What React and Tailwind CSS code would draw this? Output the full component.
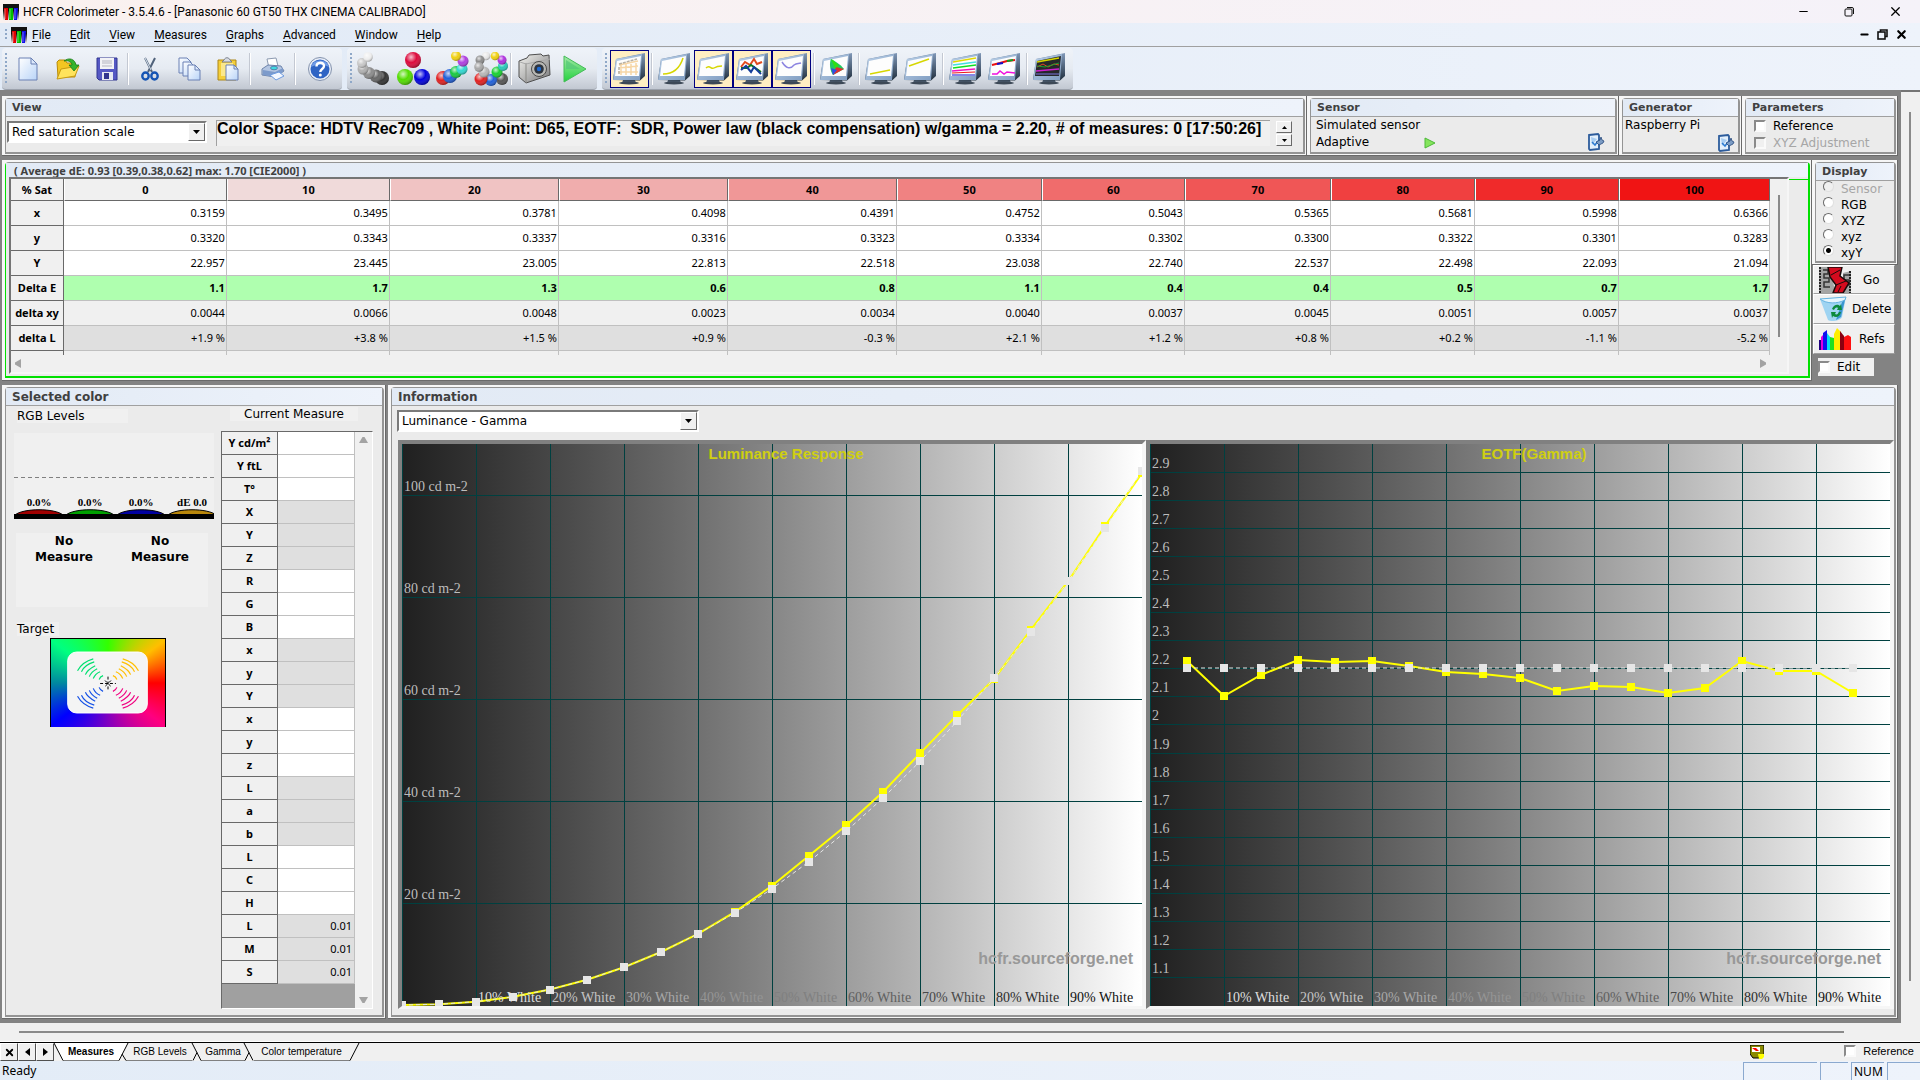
import { Minus, X } from 'lucide-react'

const ui = "font-['DejaVu_Sans',sans-serif] text-[12px] leading-[14px]"
const segoe = "font-['Noto_Sans',sans-serif]"

const menuItems = ['File', 'Edit', 'View', 'Measures', 'Graphs', 'Advanced', 'Window', 'Help']

const columns = [
  { sat: '0', width: 163, bg: 'bg-[#f0f0f0]' },
  { sat: '10', width: 163, bg: 'bg-[#f0dada]' },
  { sat: '20', width: 169, bg: 'bg-[#f0c3c3]' },
  { sat: '30', width: 169, bg: 'bg-[#f0adad]' },
  { sat: '40', width: 169, bg: 'bg-[#f09797]' },
  { sat: '50', width: 145, bg: 'bg-[#f08282]' },
  { sat: '60', width: 143, bg: 'bg-[#f06c6c]' },
  { sat: '70', width: 146, bg: 'bg-[#f05656]' },
  { sat: '80', width: 144, bg: 'bg-[#f04040]' },
  { sat: '90', width: 144, bg: 'bg-[#f02a2a]' },
  { sat: '100', width: 151, bg: 'bg-[#f01414]' },
]

const rows = [
  { name: 'x', bg: 'bg-white', values: ['0.3159', '0.3495', '0.3781', '0.4098', '0.4391', '0.4752', '0.5043', '0.5365', '0.5681', '0.5998', '0.6366'] },
  { name: 'y', bg: 'bg-white', values: ['0.3320', '0.3343', '0.3337', '0.3316', '0.3323', '0.3334', '0.3302', '0.3300', '0.3322', '0.3301', '0.3283'] },
  { name: 'Y', bg: 'bg-white', values: ['22.957', '23.445', '23.005', '22.813', '22.518', '23.038', '22.740', '22.537', '22.498', '22.093', '21.094'] },
  { name: 'Delta E', bg: 'bg-[#afffaf] font-bold', values: ['1.1', '1.7', '1.3', '0.6', '0.8', '1.1', '0.4', '0.4', '0.5', '0.7', '1.7'] },
  { name: 'delta xy', bg: 'bg-[#f0f0f0]', values: ['0.0044', '0.0066', '0.0048', '0.0023', '0.0034', '0.0040', '0.0037', '0.0045', '0.0051', '0.0057', '0.0037'] },
  { name: 'delta L', bg: 'bg-[#dfdfdf]', values: ['+1.9 %', '+3.8 %', '+1.5 %', '+0.9 %', '-0.3 %', '+2.1 %', '+1.2 %', '+0.8 %', '+0.2 %', '-1.1 %', '-5.2 %'] },
]

const measureRows = [
  ['Y cd/m²'], ['Y ftL'], ['T°'],
  ['X', true], ['Y', true], ['Z', true],
  ['R'], ['G'], ['B'],
  ['x', true], ['y', true], ['Y', true],
  ['x'], ['y'], ['z'],
  ['L', true], ['a', true], ['b', true],
  ['L'], ['C'], ['H'],
  ['L', true, '0.01'], ['M', true, '0.01'], ['S', true, '0.01'],
]

const whiteLabels = [
  ['10% White', '#dedede'],
  ['20% White', '#c4c4c4'],
  ['30% White', '#a8a8a8'],
  ['40% White', '#959595'],
  ['50% White', '#808080'],
  ['60% White', '#606060'],
  ['70% White', '#484848'],
  ['80% White', '#2c2c2c'],
  ['90% White', '#101010'],
]

/* ---------- shared pieces ---------- */

const Panel = ({ title, wide, className = '', bodyClass = '', children }) => (
  <section className={`flex flex-col bg-[#f6f6f6] border-r border-b border-[#696969] pt-[2px] pl-[3px] pr-px pb-px ${className}`}>
    <div className="flex-1 flex flex-col bg-[#ebebeb] border-t border-l border-r-2 border-b-2 border-[#949494] rounded-t-sm">
      <h2 className={`h-[18px] px-[6px] border-b border-[#a0a0a0] bg-linear-to-r from-[#e2eaf5] to-[#eef3fb] font-['DejaVu_Sans',sans-serif] leading-[18px] font-bold text-[#404040] ${wide ? 'text-[12px]' : 'text-[11px]'}`}>
        {title}
      </h2>
      <div className={`flex-1 ${bodyClass}`}>{children}</div>
    </div>
  </section>
)

const Combo = ({ label, value, className }) => (
  <div className={`relative flex h-[22px] border-2 border-t-[#7a7a7a] border-l-[#7a7a7a] border-r-white border-b-white bg-white ${className}`}>
    <select aria-label={label} defaultValue={value} className={`w-full appearance-none bg-white pl-[3px] outline-none ${ui} text-black`}>
      <option>{value}</option>
    </select>
    <span className="pointer-events-none absolute right-0 top-0 bottom-0 w-[17px] bg-[#f0f0f0] border border-t-white border-l-white border-r-[#696969] border-b-[#696969] flex items-center justify-center">
      <svg width="7" height="4" viewBox="0 0 7 4"><path d="M0 0h7L3.5 4z" /></svg>
    </span>
  </div>
)

const Check = ({ label, disabled, small }) => (
  <label className={`flex items-center gap-[7px] ${small ? "font-['Liberation_Sans',sans-serif] text-[11px] leading-[14px]" : ui} ${disabled ? 'text-[#a6a6a6]' : 'text-black'}`}>
    <input
      type="checkbox"
      disabled={disabled}
      className="appearance-none w-[12px] h-[12px] shrink-0 border-2 border-t-[#8a8a8a] border-l-[#8a8a8a] border-r-[#fafafa] border-b-[#fafafa] bg-white checked:bg-black disabled:bg-[#f0f0f0]"
    />
    {label}
  </label>
)

/* ---------- icons ---------- */

const AppIcon = () => (
  <svg width="16" height="16" viewBox="0 0 16 16">
    <defs>
      <linearGradient id="app-bg" x1="0" y1="0" x2="0" y2="1"><stop stopColor="#000" /><stop offset="1" stopColor="#e8e8e8" /></linearGradient>
    </defs>
    <path d="M0 0h16v10H0z" fill="#111" />
    <path d="M0 6h16v10H0z" fill="url(#app-bg)" />
    <path d="M1 4h4v12H2z" fill="#e00000" />
    <path d="M6 4h4v12H6z" fill="#00c000" />
    <path d="M11 4h4l-1 12h-3z" fill="#1010e8" />
    <path d="M2 5v10M7 5v10M12 5v10" stroke="#fff" strokeOpacity=".4" />
  </svg>
)

const RestoreIcon = ({ bold }) => (
  <svg width="11" height="11" viewBox="0 0 11 11" fill="none" stroke="#111" strokeWidth={bold ? 1.6 : 1}>
    <rect x="1" y="3" width="7" height="7" rx={bold ? 0 : 1} />
    <path d={bold ? 'M3.500 3V1H10v6.500H8' : 'M3 1.500h5q1.500 0 1.500 1.500v5'} />
  </svg>
)

const NewIcon = () => (
  <svg width="24" height="24" viewBox="0 0 24 24">
    <defs><linearGradient id="page" x1="0" y1="0" x2="1" y2="1"><stop stopColor="#fff" /><stop offset="1" stopColor="#b9d4f8" /></linearGradient></defs>
    <path d="M3 1h12l6 6v16H3z" fill="url(#page)" stroke="#6a80b4" />
    <path d="M15 1v6h6z" fill="#dbe8fb" stroke="#6a80b4" />
  </svg>
)

const OpenIcon = () => (
  <svg width="26" height="24" viewBox="0 0 26 24">
    <path d="M2 5l2-2h6l2 3h8v14H3z" fill="#f3c622" stroke="#b88a08" />
    <path d="M2 22L6 12l18-3-4 10z" fill="#ffe35c" stroke="#c79a10" />
    <path d="M9 4c5-4 11-2 12 4h3l-5 6-5-6h3c0-3-4-5-8-4z" fill="#35b52c" stroke="#167a14" strokeWidth=".8" />
  </svg>
)

const SaveIcon = () => (
  <svg width="24" height="24" viewBox="0 0 24 24">
    <path d="M2 1h20v22H4l-2-2z" fill="#5558c4" stroke="#31348f" />
    <path d="M5 1h14v11H5z" fill="#f2f2f6" />
    <path d="M7 4h10M7 6h10M7 9h10" stroke="#b4b4c0" />
    <path d="M7 15h11v8H7z" fill="#e6e8f2" />
    <path d="M9 16h5v6H9z" fill="#31348f" />
  </svg>
)

const CutIcon = () => (
  <svg width="20" height="24" viewBox="0 0 20 24" fill="none">
    <path d="M5 1l7 14M15 1l-7 14" stroke="#50627a" strokeWidth="2" />
    <path d="M5 1l6 12" stroke="#dfe8f2" />
    <ellipse cx="5.500" cy="19" rx="3.200" ry="3.500" stroke="#1554b4" strokeWidth="2.400" />
    <ellipse cx="14.500" cy="19" rx="3.200" ry="3.500" stroke="#1554b4" strokeWidth="2.400" />
  </svg>
)

const CopyIcon = () => (
  <svg width="24" height="24" viewBox="0 0 24 24" stroke="#6a80b4">
    <path d="M2 1h8l4 4v11H2z" fill="url(#page)" />
    <path d="M6 5h7l4 4v10H6z" fill="url(#page)" />
    <path d="M11 8h7l5 5v10H11z" fill="url(#page)" />
    <path d="M18 8v5h5z" fill="#dbe8fb" />
  </svg>
)

const PasteIcon = () => (
  <svg width="24" height="24" viewBox="0 0 24 24">
    <path d="M2 3h18v20H2z" fill="#f5cf3a" stroke="#ac8618" />
    <path d="M5 6h12v13H5z" fill="#fbe88c" />
    <path d="M6 5l2-2c1-3 5-3 6 0l2 2z" fill="#d8dce4" stroke="#7a808c" />
    <path d="M10 8h8l4 4v11H10z" fill="url(#page)" stroke="#6a80b4" />
    <path d="M18 8v4h4z" fill="#dbe8fb" stroke="#6a80b4" />
  </svg>
)

const PrintIcon = () => (
  <svg width="24" height="24" viewBox="0 0 24 24">
    <path d="M6 2l9-1 2 8-9 2z" fill="#fff" stroke="#8c9ab0" />
    <path d="M1 12l6-4 13 1 3 5-9 6-13-2z" fill="#b4c6e2" stroke="#6d84ab" />
    <path d="M2 13l12 2 8-4v4l-8 5-12-2z" fill="#7d9bcb" />
    <path d="M9 18l9-3 5 4-8 4z" fill="#f4f8ff" stroke="#6d9be0" />
    <ellipse cx="13" cy="11" rx="3.500" ry="1.800" fill="#40d8e0" stroke="#3a5890" strokeWidth=".6" />
  </svg>
)

const HelpIcon = () => (
  <svg width="26" height="26" viewBox="0 0 26 26">
    <circle cx="13" cy="13" r="11.500" fill="#e9eef8" stroke="#8392ac" />
    <circle cx="13" cy="13" r="9.500" fill="#2f64c4" />
    <path d="M4 11a9.500 9.500 0 0 1 18 0c-6-3-12-3-18 0z" fill="#6f9be6" />
    <path d="M9.500 10.500c0-5 7.500-5 7.500-.5 0 3-3.700 3-3.700 6" stroke="#fff" strokeWidth="2.400" fill="none" />
    <circle cx="13.300" cy="19" r="1.500" fill="#fff" />
  </svg>
)

const Balls = ({ items, id }) => (
  <svg width="34" height="34" viewBox="0 0 34 34">
    <defs>
      <radialGradient id={id} cx=".38" cy=".32" r=".7">
        <stop stopColor="#fff" stopOpacity=".75" />
        <stop offset=".5" stopColor="#fff" stopOpacity="0" />
        <stop offset="1" stopColor="#000" stopOpacity=".35" />
      </radialGradient>
    </defs>
    {items.map(([x, y, r, c], i) => (
      <g key={i}>
        <circle cx={x} cy={y} r={r} fill={c} />
        <circle cx={x} cy={y} r={r} fill={`url(#${id})`} />
      </g>
    ))}
  </svg>
)

const grayBalls = [[26, 26, 7, '#333'], [20, 24, 6.5, '#666'], [13, 21, 6, '#8c8c8c'], [7, 17, 5.5, '#b0b0b0'], [6, 11, 5, '#c8c8c8'], [12, 5, 4.8, '#efefef']]
const rgbBalls = [[17, 8, 8, '#dc0a3c'], [9, 25, 8, '#52dc00'], [26, 25, 8, '#0000dc']]
const satBalls = [[8, 26, 7, '#e02020'], [15, 24, 7, '#2060d8'], [21, 20, 6, '#18c840'], [27, 17, 5.5, '#30d8d0'], [28, 9, 5.5, '#b040e0'], [21, 4, 5, '#f0d010']]
const ringBalls = [[28, 27, 6, '#555'], [17, 28, 6, '#2060d8'], [7, 27, 6.5, '#e02020'], [10, 20, 5.5, '#b8b8b8'], [23, 20, 5.5, '#18d030'], [29, 14, 5, '#28c8b8'], [28, 8, 4.5, '#b030e0'], [21, 4, 4.3, '#f0d010'], [12, 4, 4.3, '#e8e8e8'], [6, 8, 4.5, '#8c8c8c'], [5, 15, 4.8, '#a8a8a8']]

const CameraIcon = () => (
  <svg width="34" height="32" viewBox="0 0 34 32">
    <defs><linearGradient id="cam" x1="0" y1="0" x2="1" y2="1"><stop stopColor="#f4f4f0" /><stop offset="1" stopColor="#77777a" /></linearGradient></defs>
    <path d="M2 8l8-3 2-3 12-1 2 2 6-1 1 20-24 8-7-6z" fill="url(#cam)" stroke="#4e4e4e" />
    <path d="M9 10v20" stroke="#8a8a86" />
    <path d="M3 9l6 2 24-5" stroke="#aaa" fill="none" />
    <circle cx="22" cy="16" r="7.500" fill="#b8b8b4" stroke="#4a4a4a" />
    <circle cx="22" cy="16" r="4.800" fill="#2c3440" />
    <circle cx="22" cy="16" r="2.200" fill="#1d6ad4" />
  </svg>
)

const PlayIcon = () => (
  <svg width="28" height="28" viewBox="0 0 28 28">
    <defs><linearGradient id="play" x1="0" y1="0" x2="0" y2="1"><stop stopColor="#a4e8a8" /><stop offset="1" stopColor="#22d23c" /></linearGradient></defs>
    <path d="M3 1l22 13L3 27z" fill="url(#play)" stroke="#44bc58" />
    <path d="M5 5l14 9H5z" fill="#54c878" fillOpacity=".7" />
  </svg>
)

const SmallPlay = () => (
  <svg width="12" height="12" viewBox="0 0 12 12"><path d="M1 1l10 5-10 5z" fill="#84e45c" stroke="#4cb838" /></svg>
)

const Monitor = ({ dark, children }) => (
  <svg width="33" height="33" viewBox="0 0 33 33">
    <defs>
      <linearGradient id="bezel" x1="0" y1="0" x2="1" y2="1"><stop stopColor="#bcd2ea" /><stop offset="1" stopColor="#7f9cc0" /></linearGradient>
      <linearGradient id="side" x1="0" y1="0" x2="0" y2="1"><stop stopColor="#8098b8" /><stop offset="1" stopColor="#22303f" /></linearGradient>
    </defs>
    <path d="M10 28h12l1 3H9z" fill="#48586a" />
    <ellipse cx="16" cy="31" rx="10" ry="1.500" fill="#3c4856" />
    <path d="M3 7L32 1v23l-5 4.500L0 28z" fill="url(#side)" />
    <path d="M3 7l26-5-2 26H0z" fill="url(#bezel)" />
    <path d="M4 9l24-5-2 20H2z" fill={dark ? '#26282a' : '#fdfdfd'} />
    <g fill="none">{children}</g>
  </svg>
)

const monitorGroups = [
  [{ name: 'Measures', on: true, draw: <><path d="M6 13l19-4M6 16l19-2M5 20h20M8 13v10M13 11v12M18 10v13M23 9v14" stroke="#f6d6a6" strokeWidth="1.500" /><path d="M6 12l18-5M6 15v7" stroke="#b8b0a4" strokeWidth="1.500" strokeDasharray="3 1" /></> }],
  [
    { name: 'Luminance', draw: <path d="M5 22c8 0 16-3 20-16" stroke="#d6d600" strokeWidth="1.500" /> },
    { name: 'Gamma', on: true, draw: <path d="M9 16c4-4 5 2 8 0s5-2 8-2" stroke="#d6d600" strokeWidth="1.500" /> },
    { name: 'RGB Levels', on: true, draw: <><path d="M5 15l4-5 5 3 4-6 3 5 5-2" stroke="#e04a20" strokeWidth="2" /><path d="M5 16h6l4-3 10 7" stroke="#107a20" strokeWidth="2" /><path d="M5 18l5-4 5 6 3-5 7 7" stroke="#123c9a" strokeWidth="2" /></> },
    { name: 'Color temperature', on: true, draw: <path d="M7 10c4 6 8 8 12 3 3-2 4-1 7-2" stroke="#8c84e0" strokeWidth="1.500" /> },
  ],
  [{ name: 'CIE diagram', draw: <><path d="M11 7c-2 4-1 12 2 16l11-6C20 12 15 9 11 7z" fill="#20c860" /><path d="M13 23l11-6-8-2z" fill="#e03030" /><path d="M11 16l2 7 4-5z" fill="#3050e0" /><path d="M11 7c3 2 6 4 8 7l-4 2z" fill="#30e010" /></> }],
  [
    { name: 'Near black', draw: <path d="M5 22l20-4" stroke="#d6d600" strokeWidth="1.500" /> },
    { name: 'Near white', draw: <path d="M5 14l20-7" stroke="#d6d600" strokeWidth="1.500" /> },
  ],
  [
    { name: 'Saturation luminance', draw: <><path d="M4 10l23-4" stroke="#e0d800" strokeWidth="1.500" /><path d="M4 13l23-3" stroke="#40e0e0" strokeWidth="1.500" /><path d="M4 16l23-3" stroke="#10e020" strokeWidth="1.500" /><path d="M3 19l23-2" stroke="#f010c0" strokeWidth="1.500" /><path d="M3 21l23-1" stroke="#f01818" /><path d="M3 23h23" stroke="#1010d0" /></> },
    { name: 'Saturation shift', draw: <><path d="M4 13l8-2 7-2 8-1" stroke="#e81010" strokeWidth="2" /><path d="M9 12l6-1" stroke="#1010d0" strokeWidth="2" /><path d="M19 9l6-1" stroke="#10a020" strokeWidth="2" /><path d="M4 22h5l3-3 4 3 3-2 8 1" stroke="#f010e0" strokeWidth="1.500" /></> },
  ],
  [{ name: 'Free measures', dark: true, draw: <><path d="M4 10l22-4" stroke="#d6d600" strokeWidth="1.500" /><path d="M4 15l6-3 5 3 6-3 5 1" stroke="#e04a20" /><path d="M4 14l8 1 14-4" stroke="#18a030" /><path d="M3 19l23-2" stroke="#d020d0" strokeWidth="1.500" /><path d="M3 22h23" stroke="#7a74e0" /></> }],
]

const EditIcon = () => (
  <svg width="18" height="18" viewBox="0 0 18 18">
    <path d="M2 2l9-1 1 1v14l-9 1-1-1z" fill="#e4f0fc" stroke="#2d5c9c" strokeWidth="1.800" />
    <path d="M4 4l1 8 5-6z" fill="#a8cdf2" />
    <path d="M5 9l3 3 3-4" stroke="#2c7ad0" fill="none" strokeWidth="1.500" />
    <path d="M9 9l4-2 1-3 1 3 2 1-1 2-4 2z" fill="#7c9cc4" stroke="#24487c" strokeWidth=".8" />
  </svg>
)

const GoIcon = () => (
  <svg width="32" height="26" viewBox="0 0 32 26">
    <path d="M0 0h12l4 26H0zM24 6l8-2v22h-8z" fill="#a4a4a4" />
    <path d="M1 0v26M31 4v22" stroke="#222" strokeWidth="2" strokeDasharray="2 1" />
    <path d="M4 3h5v4H5v4h5v4H5v5h6M30 8h-5v5h5v5h-4v5" stroke="#333" strokeWidth="1.500" fill="none" />
    <path d="M9 0h14l-2 9 9 7-6 10H14l3-8-6-8z" fill="#d40a1e" stroke="#1a0a0a" strokeWidth="1.500" />
    <path d="M12 8l9-5M17 18l10-4M19 25l3-6" stroke="#1a0a0a" />
  </svg>
)

const DeleteIcon = () => (
  <svg width="28" height="26" viewBox="0 0 28 26">
    <path d="M1 3l26-2-4 20c-2 4-11 5-14 3z" fill="#9fd4f2" />
    <path d="M1 3l26-2-1 3c-8 4-18 4-25-1z" fill="#e6f5fd" stroke="#64b2e0" />
    <path d="M23 6l3-2-4 17-5 3z" fill="#3c96d0" />
    <path d="M13 13c2-5 6-5 8-3l1-2 1 6h-5l1-2c-2-1-3 0-4 2zM22 16c-1 5-5 6-8 4l-1 2-1-6h5l-1 2c2 1 3 0 4-2z" fill="#0c8a3c" />
  </svg>
)

const RefsIcon = () => (
  <svg width="32" height="22" viewBox="0 0 32 22">
    <path d="M0 22V12h3v10z" fill="#200080" />
    <path d="M2 22V9l2-2v15z" fill="#e000e0" />
    <path d="M4 22V5l4-3v20z" fill="#1010f0" />
    <path d="M8 22V5l3 4v13z" fill="#00e0f0" />
    <path d="M11 22V9l4 1v12z" fill="#20e020" />
    <path d="M15 22V6l3-6 4 4v18z" fill="#ffee00" />
    <path d="M21 22V3l4 5v14z" fill="#8a0010" />
    <path d="M25 22V9l4-2 3 2v13z" fill="#ff1010" />
  </svg>
)

/* ---------- window bars ---------- */

const Grip = ({ className = 'h-[32px]' }) => (
  <span className={`w-[2px] shrink-0 bg-[repeating-linear-gradient(to_bottom,#8fa8c8_0px,#8fa8c8_2px,transparent_2px,transparent_4px)] ${className}`} />
)

const TitleBar = () => (
  <header className="h-[23px] flex items-center pl-[3px] pr-[2px] bg-linear-to-r from-[#faf1ef] to-[#f5f2f9]">
    <AppIcon />
    <h1 className="flex-1 pl-1 font-['Roboto',sans-serif] text-[12px] leading-4 text-black">HCFR Colorimeter - 3.5.4.6 - [Panasonic 60 GT50 THX CINEMA CALIBRADO]</h1>
    <button aria-label="Minimize" className="w-[46px] flex justify-center"><Minus size={13} strokeWidth={2} /></button>
    <button aria-label="Restore" className="w-[46px] flex justify-center"><RestoreIcon /></button>
    <button aria-label="Close" className="w-[46px] flex justify-center"><X size={15} strokeWidth={2} /></button>
  </header>
)

const MenuBar = () => (
  <nav className="h-[24px] flex items-center pl-[5px] border-b border-[#a0a0a0] bg-linear-to-r from-[#e1eaf6] to-[#eef3fb]">
    <Grip className="h-[12px]" />
    <span className="pl-[4px] pr-[5px]"><AppIcon /></span>
    <div className="flex-1 flex gap-[19px] font-['Roboto',sans-serif] text-[12px] leading-4 text-black">
      {menuItems.map((item) => (
        <button key={item}><span className="underline underline-offset-2">{item[0]}</span>{item.slice(1)}</button>
      ))}
    </div>
    <div className="flex items-center gap-[7px] pr-[12px]">
      <button aria-label="Minimize document"><Minus size={11} strokeWidth={4} /></button>
      <button aria-label="Restore document"><RestoreIcon bold /></button>
      <button aria-label="Close document"><X size={13} strokeWidth={4} /></button>
    </div>
  </nav>
)

const Sep = () => <span className="w-[2px] h-[32px] shrink-0 bg-[#c3c8d2] border-r border-white" />

const ToolBar = ({ className = '', children }) => (
  <div className={`h-[42px] flex items-center pl-[3px] rounded-sm border-b border-[#9ca2ac] bg-linear-to-b from-[#eff3f9] via-[#e6ebf2] to-[#c2c8d2] ${className}`}>
    <Grip />
    {children}
  </div>
)

const Tool = ({ name, w, children }) => (
  <button aria-label={name} className={`h-[38px] shrink-0 flex items-center justify-center ${w}`}>{children}</button>
)

const ToolBars = () => (
  <div className="flex gap-[5px] pl-[2px] pt-[1px] bg-linear-to-r from-[#e1eaf6] to-[#eef3fb]">
    <ToolBar className="w-[340px]">
      <Tool name="New" w="w-[42px]"><NewIcon /></Tool>
      <Tool name="Open" w="w-[37px]"><OpenIcon /></Tool>
      <Tool name="Save" w="w-[41px]"><SaveIcon /></Tool>
      <Sep />
      <Tool name="Cut" w="w-[42px]"><CutIcon /></Tool>
      <Tool name="Copy" w="w-[36px]"><CopyIcon /></Tool>
      <Tool name="Paste" w="w-[42px]"><PasteIcon /></Tool>
      <Sep />
      <Tool name="Print" w="w-[43px]"><PrintIcon /></Tool>
      <Sep />
      <Tool name="Help" w="w-[48px]"><HelpIcon /></Tool>
    </ToolBar>
    <ToolBar className="w-[250px]">
      <Tool name="Gray scale" w="w-[42px]"><Balls id="b1" items={grayBalls} /></Tool>
      <Tool name="Primaries" w="w-[37px]"><Balls id="b2" items={rgbBalls} /></Tool>
      <Tool name="Primaries and secondaries" w="w-[41px]"><Balls id="b3" items={satBalls} /></Tool>
      <Tool name="Saturations" w="w-[38px]"><Balls id="b4" items={ringBalls} /></Tool>
      <Sep />
      <Tool name="Single measure" w="w-[44px]"><CameraIcon /></Tool>
      <Tool name="Continuous measures" w="w-[38px]"><PlayIcon /></Tool>
    </ToolBar>
    <ToolBar className="pr-[4px]">
      <div className="flex items-center pl-[3px]">
        {monitorGroups.map((group, i) => (
          <div key={i} className="flex items-center">
            {i > 0 && <span className="px-[2px] flex"><Sep /></span>}
            {group.map((m) => (
              <button
                key={m.name}
                aria-label={m.name}
                className={`w-[39px] h-[38px] flex items-center justify-center border ${
                  m.on ? 'bg-[#ffeec2] border-[#000080]' : 'border-transparent'
                }`}
              >
                <Monitor dark={m.dark}>{m.draw}</Monitor>
              </button>
            ))}
          </div>
        ))}
      </div>
    </ToolBar>
  </div>
)

/* ---------- top row ---------- */

const spinBtn = 'w-4 h-[12px] flex items-center justify-center bg-[#f0f0f0] border border-t-white border-l-white border-r-[#696969] border-b-[#696969]'

const TopRow = () => (
  <div className="flex min-h-[60px]">
    <Panel title="View" className="flex-1" bodyClass="flex items-start pt-[3px] pr-[11px]">
      <Combo label="View" value="Red saturation scale" className="mt-[1px] ml-[1px] w-[200px]" />
      <p className="flex-1 ml-[9px] h-[26px] border-t border-l border-[#a0a0a0] bg-[#f0f0f0] font-['Liberation_Sans',sans-serif] text-[16px] leading-[15px] font-bold text-black whitespace-pre overflow-hidden">
        Color Space: HDTV Rec709 , White Point: D65, EOTF:  SDR, Power law (black compensation) w/gamma = 2.20, # of measures: 0 [17:50:26]
      </p>
      <div className="ml-[6px] pt-[1px] flex flex-col gap-px">
        <button aria-label="Scroll up" className={spinBtn}><svg width="5" height="3" viewBox="0 0 5 3"><path d="M0 3h5L2.500 0z" /></svg></button>
        <button aria-label="Scroll down" className={spinBtn}><svg width="5" height="3" viewBox="0 0 5 3"><path d="M0 0h5L2.500 3z" /></svg></button>
      </div>
    </Panel>
    <Panel title="Sensor" className="w-[312px]" bodyClass="flex items-end justify-between pl-[5px] pr-[10px] pb-px">
      <div className={`self-start text-black ${ui}`}>
        <p className="leading-[17px]">Simulated sensor</p>
        <p className="leading-[17px] flex items-center gap-[55px]"><span>Adaptive</span><SmallPlay /></p>
      </div>
      <button aria-label="Configure sensor"><EditIcon /></button>
    </Panel>
    <Panel title="Generator" className="w-[123px]" bodyClass="flex items-end justify-between pl-[2px] pr-[3px]">
      <p className={`self-start pt-[1px] text-black ${ui}`}>Raspberry Pi</p>
      <button aria-label="Configure generator" className="-ml-4"><EditIcon /></button>
    </Panel>
    <Panel title="Parameters" className="w-[156px]" bodyClass="pl-[8px] pt-[2px] flex flex-col gap-[3px]">
      <Check label="Reference" />
      <Check label="XYZ Adjustment" disabled />
    </Panel>
  </div>
)

/* ---------- measures grid ---------- */

const headCell = 'bg-[#f0f0f0] border-r border-b border-[#696969] font-bold text-center p-0'

const MeasuresGrid = () => (
  <section className="flex-1 flex flex-col bg-[#f6f6f6] border-r border-b border-[#696969] pt-[2px] pl-[3px] pr-px pb-[2px]">
    <div className="flex-1 pb-[2px] bg-[#ebebeb] border-t border-t-[#949494] border-l border-l-[#00e000] border-r-2 border-r-[#00e000] border-b-2 border-b-[#00e000] rounded-t-sm">
      <h2 className="h-[14px] pl-[8px] overflow-hidden bg-linear-to-r from-[#e2eaf5] to-[#eef3fb] font-['Noto_Sans',sans-serif] text-[11px] leading-[16px] font-bold text-[#404040]">
        ( Average dE: 0.93 [0.39,0.38,0.62] max: 1.70 [CIE2000] )
      </h2>
      <div className="flex">
        <div className="flex-1 ml-[3px] border-2 border-t-[#757575] border-l-[#757575] border-r-[#f6f6f6] border-b-[#f6f6f6] bg-[#f0f0f0]">
          <div className="flex">
            <table className={`flex-1 table-fixed border-separate border-spacing-0 text-[11px] leading-4 text-black ${segoe}`}>
              <colgroup>
                <col style={{ width: '3.01%' }} />
                {columns.map((c) => <col key={c.sat} style={{ width: `${(c.width / 1759) * 100}%` }} />)}
              </colgroup>
              <thead>
                <tr className="h-[22px]">
                  <th className={headCell}>% Sat</th>
                  {columns.map((c) => (
                    <th key={c.sat} scope="col" className={`border-r border-b border-l border-l-white border-r-[#696969] border-b-[#696969] font-bold p-0 ${c.bg}`}>{c.sat}</th>
                  ))}
                </tr>
              </thead>
              <tbody>
                {rows.map((r) => (
                  <tr key={r.name} className="h-[25px]">
                    <th scope="row" className={headCell}>{r.name}</th>
                    {r.values.map((v, i) => (
                      <td key={i} className={`border-r border-b border-[#c0c0c0] text-right p-0 pr-px ${r.bg}`}>{v}</td>
                    ))}
                  </tr>
                ))}
                <tr className="h-[4px]">
                  <th className="p-0 border-r border-[#696969]"></th>
                  {columns.map((c) => <td key={c.sat} className="p-0 border-r border-[#c0c0c0]"></td>)}
                </tr>
              </tbody>
            </table>
            <div className="w-[17px] pl-[8px] pt-[16px] pb-[18px]"><div className="w-[2px] h-full bg-[#8a8a8a]" /></div>
          </div>
          <div className="h-[17px] pl-[4px] pr-[21px] flex items-center justify-between">
            <svg width="6" height="9" viewBox="0 0 6 9"><path d="M6 0v9L0 5.500v-2z" fill="#a3a3a3" /></svg>
            <svg width="6" height="9" viewBox="0 0 6 9"><path d="M0 0v9l6-3.500v-2z" fill="#a3a3a3" /></svg>
          </div>
        </div>
        <div className="w-[19px] mt-[2px] border-t border-[#00e000]" />
      </div>
    </div>
  </section>
)

const sideBtn = `flex items-center pl-[5px] bg-[#f0f0f0] border border-t-white border-l-white border-r-[#8a8a8a] border-b-[#a0a0a0] text-black ${ui}`

const DisplayColumn = () => (
  <div className="w-[86px] flex flex-col">
    <Panel title="Display" bodyClass="pl-[7px]">
      {['Sensor', 'RGB', 'XYZ', 'xyz', 'xyY'].map((mode) => (
        <label key={mode} className={`h-[15px] mb-px flex items-center gap-[7px] ${ui} ${mode === 'Sensor' ? 'text-[#a6a6a6]' : 'text-black'}`}>
          <input
            type="radio"
            name="display"
            disabled={mode === 'Sensor'}
            defaultChecked={mode === 'xyY'}
            className="appearance-none w-[11px] h-[11px] mb-1 shrink-0 rounded-full border border-t-[#696969] border-l-[#696969] border-r-[#e0e0e0] border-b-[#e0e0e0] bg-white disabled:bg-[#f0f0f0] checked:bg-[radial-gradient(circle,#000_2px,#fff_3px)]"
          />
          {mode}
        </label>
      ))}
    </Panel>
    <div className="pl-[1px] pr-[3px] flex flex-col">
      <button className={`${sideBtn} h-[29px] gap-[12px]`}><GoIcon />Go</button>
      <button className={`${sideBtn} h-[30px] gap-[5px]`}><DeleteIcon />Delete</button>
      <button className={`${sideBtn} h-[30px] gap-[8px]`}><RefsIcon />Refs</button>
    </div>
    <div className="ml-[6px] mt-[4px] w-[56px] h-[18px] bg-[#f0f0f0] flex items-center"><Check label="Edit" /></div>
  </div>
)

/* ---------- selected color ---------- */

const RgbLevels = () => (
  <svg viewBox="0 0 200 86" className="block w-[200px] h-[86px] bg-[#f0f0f0]">
    <path d="M0 44.500h200" stroke="#808080" strokeDasharray="4 3" />
    {['#a00000', '#00a000', '#0000a0', '#b8860b'].map((c, i) => (
      <path key={c} d={`M${1 + i * 51} 82c8-7 40-7 48 0z`} fill={c} stroke="#000" />
    ))}
    <path d="M0 81h200v5H0z" />
    {['0.0%', '0.0%', '0.0%', 'dE 0.0'].map((t, i) => (
      <text key={i} x={25 + i * 51} y="73" textAnchor="middle" className="font-['Liberation_Serif',serif] text-[11px] font-bold">{t}</text>
    ))}
  </svg>
)

const arcs = (color, sx, sy) => (
  <g transform={`translate(58 45) scale(${sx} ${sy})`} stroke={color} fill="none" strokeWidth="1.200">
    <path d="M5 -8q3 1 4 4M8 -12q5 2 7 7M11 -15q6 3 8 8M13 -18q8 4 10 9M14 -22q10 3 13 10M15 -25q11 3 16 12" />
  </g>
)

const TargetView = () => (
  <div className="w-[116px] h-[89px] border border-b-0 border-black bg-[conic-gradient(#3f0_0deg,#ffbf00_53deg,#f00_90deg,#ff0080_127deg,#8000c0_180deg,#00f_233deg,#0088a0_270deg,#00ff80_307deg,#3f0_360deg)]">
    <svg viewBox="0 0 116 89" className="w-full h-full">
      <rect x="17" y="13" width="81" height="62" rx="9" fill="#f4f4f4" stroke="#fff" />
      {arcs('#00e070', -1, 1)}
      {arcs('#ffbf00', 1, 1)}
      {arcs('#1450e6', -1, -1)}
      {arcs('#f00080', 1, -1)}
      <path d="M50 45h16M58 38v15M55 42l6 6M61 42l-6 6" stroke="#000" strokeDasharray="3 2" />
    </svg>
  </div>
)

const SelectedColor = () => (
  <Panel wide title="Selected color" className="w-[384px]" bodyClass="flex pl-[8px] pb-[6px]">
    <div className={`w-[207px] pt-[3px] text-black ${ui}`}>
      <h3 className="ml-[3px] w-[111px] bg-[#f0f0f0]">RGB Levels</h3>
      <div className="mt-[10px]"><RgbLevels /></div>
      <div className="mt-[14px] ml-[2px] w-[192px] h-[74px] grid grid-cols-2 content-start bg-[#f0f0f0] font-bold leading-[16px] text-center">
        <p>No<br />Measure</p>
        <p>No<br />Measure</p>
      </div>
      <h3 className="mt-[15px] ml-[3px] w-[42px] bg-[#f0f0f0]">Target</h3>
      <div className="mt-[2px] ml-[36px]"><TargetView /></div>
    </div>
    <div className="w-[152px] flex flex-col">
      <h3 className={`mt-[1px] mb-[10px] ml-[9px] w-[128px] text-center bg-[#f0f0f0] text-black ${ui}`}>Current Measure</h3>
      <div className="flex-1 flex border border-t-[#696969] border-l-[#696969] border-r-white border-b-white bg-[#a0a0a0]">
        <div className="flex-1">
          <table className={`w-full table-fixed border-separate border-spacing-0 text-[11px] leading-4 text-black ${segoe}`}>
            <colgroup><col className="w-[56px]" /><col /></colgroup>
            <tbody>
              {measureRows.map(([name, shaded, value], i) => (
                <tr key={i} className="h-[23px]">
                  <th scope="row" className={headCell}>{name}</th>
                  <td className={`border-r border-b border-[#c0c0c0] text-right p-0 pr-[2px] ${shaded ? 'bg-[#dfdfdf]' : 'bg-white'}`}>{value}</td>
                </tr>
              ))}
            </tbody>
          </table>
        </div>
        <div className="w-[17px] py-[5px] bg-[#f0f0f0] flex flex-col items-center justify-between">
          <svg width="9" height="6" viewBox="0 0 9 6"><path d="M0 6h9L5.500 0h-2z" fill="#a3a3a3" /></svg>
          <svg width="9" height="6" viewBox="0 0 9 6"><path d="M0 0h9L5.500 6h-2z" fill="#a3a3a3" /></svg>
        </div>
      </div>
    </div>
  </Panel>
)

/* ---------- charts ---------- */

const refLum = Array.from({ length: 21 }, (_, i) => [i * 37, 561 - 534 * Math.pow(i / 20, 2.2)])
const lumDelta = [0, 0, 0, 0, 0, 0, 0, 0, 0, -1, -3, -6, -6, -6, -8, -6, 1, -2, 0, -2, 2]
const measuredLum = refLum.map(([x, y], i) => [x, y + lumDelta[i]])

const gammaY = [217, 252, 231, 216, 218, 217, 222, 228, 230, 234, 247, 242, 243, 249, 244, 217, 227, 227, 249]
const measuredGamma = gammaY.map((y, i) => [(i + 1) * 37, y])
const refGamma = gammaY.map((_, i) => [(i + 1) * 37, 224])

const points = (list) => list.map((p) => p.join(',')).join(' ')

const Squares = ({ list, color }) => (
  <g fill={color} shapeRendering="crispEdges">
    {list.map(([x, y], i) => <rect key={i} x={Math.round(x) - 4} y={Math.round(y) - 4} width="8" height="8" />)}
  </g>
)

const Chart = ({ title, yLines, reference, measured }) => (
  <div className="flex-1 border-4 border-t-[#808080] border-l-[#808080] border-r-[#f6f6f6] border-b-[#f6f6f6] border-b-[3px] bg-linear-to-r from-[#202020] to-white">
    <svg viewBox="0 0 740 562" className="block w-full">
      <g stroke="#004040" shapeRendering="crispEdges">
        {Array.from({ length: 10 }, (_, i) => <path key={i} d={`M${i * 74 + 0.5} 0v562`} />)}
        {yLines.map(([y]) => <path key={y} d={`M0 ${y + 0.5}h740`} />)}
      </g>
      <text x="384" y="15" textAnchor="middle" fill="#cfcf10" className="font-['Liberation_Sans',sans-serif] text-[15px] font-bold">{title}</text>
      <text x="731" y="520" textAnchor="end" fill="#989898" className="font-['Liberation_Sans',sans-serif] text-[16px] font-bold">hcfr.sourceforge.net</text>
      <g className="font-['Liberation_Serif',serif] text-[14px]">
        {yLines.map(([y, label]) => <text key={y} x="2" y={y - 4} fill="#bdbdbd">{label}</text>)}
        {whiteLabels.map(([label, color], i) => <text key={label} x={(i + 1) * 74 + 2} y="558" fill={color}>{label}</text>)}
      </g>
      <polyline points={points(measured)} fill="none" stroke="#ffff00" strokeWidth="2" />
      <Squares list={measured} color="#ffff00" />
      <polyline points={points(reference)} fill="none" stroke="#e6e6e6" strokeDasharray="4 3" />
      <Squares list={reference} color="#e6e6e6" />
    </svg>
  </div>
)

const lumLines = [100, 80, 60, 40, 20].map((v, i) => [51 + i * 102, `${v} cd m-2`])
const gammaLines = Array.from({ length: 19 }, (_, i) => [28 + i * 28 + (i > 9 ? 1 : 0), String((29 - i) / 10)])

const Information = () => (
  <Panel wide title="Information" className="flex-1" bodyClass="flex flex-col pt-[4px]">
    <Combo label="Information" value="Luminance - Gamma" className="ml-[5px] w-[302px]" />
    <div className="mt-[8px] ml-[6px] flex">
      <Chart title="Luminance Response" yLines={lumLines} reference={refLum} measured={measuredLum} />
      <Chart title="EOTF(Gamma)" yLines={gammaLines} reference={refGamma} measured={measuredGamma} />
    </div>
  </Panel>
)

/* ---------- bottom ---------- */

const navBtn = 'w-[18px] h-[18px] flex items-center justify-center bg-[#f0f0f0] border border-t-white border-l-white border-r-[#505050] border-b-[#505050]'

const TabStrip = () => (
  <div className="h-[19px] flex items-start border-t border-black bg-[#f0f0f0]">
    <button aria-label="Close view" className={navBtn}><X size={11} strokeWidth={4} color="#000" /></button>
    <button aria-label="Previous view" className={navBtn}><svg width="5" height="8" viewBox="0 0 5 8"><path d="M5 0v8L0 4z" /></svg></button>
    <button aria-label="Next view" className={navBtn}><svg width="5" height="8" viewBox="0 0 5 8"><path d="M0 0v8l5-4z" /></svg></button>
    <div className="relative h-[18px] flex-1 flex font-['Liberation_Sans',sans-serif] text-[10px] leading-[18px] text-black">
      <svg width="310" height="18" viewBox="0 0 310 18" className="absolute left-0 top-0">
        <path d="M0 0h74l-9 17.500H9z" fill="#fff" />
        <path d="M9 17.500h56M72 17.500h66M147 17.500h44M200 17.500h96" stroke="#808080" />
        <path d="M0 0l9 17.500M65 17.500L74 0M68 11l4 6.500M139 17.500l4-8M138 0l9 17.500M191 17.500l4-8M190 0l9 17.500M296 17.500L305 0" stroke="#000" fill="none" />
      </svg>
      <button className="relative w-[74px] font-bold">Measures</button>
      <button className="relative w-[64px]">RGB Levels</button>
      <button className="relative w-[52px] pl-[10px]">Gamma</button>
      <button className="relative w-[115px]">Color temperature</button>
    </div>
    <svg width="14" height="14" viewBox="0 0 14 14" className="mt-[2px] mr-[80px]">
      <path d="M0 0h14v9l-2 4H3L0 9z" fill="#8a8a00" stroke="#000" />
      <path d="M2 2h8v5H2z" fill="#fff" />
      <path d="M2 3h4l3 3H6z" fill="#f00" />
      <path d="M8 9h6v3l-2 2H9z" fill="#ff0" />
    </svg>
    <div className="pt-[1px] pr-[6px]"><Check label="Reference" small /></div>
  </div>
)

const statusBox = 'h-[18px] mt-[1px] pl-[2px] border-t border-l border-[#8ba9cf]'

const StatusBar = () => (
  <footer className={`h-[19px] flex gap-[3px] bg-linear-to-r from-[#e3ecf7] to-[#eef3fb] text-[12px] leading-[18px] text-black overflow-hidden ${segoe}`}>
    <p className="flex-1 pl-[2px] pt-px">Ready</p>
    <span className={`${statusBox} w-[74px]`}></span>
    <span className={`${statusBox} w-[28px]`}></span>
    <span className={`${statusBox} w-[33px]`}>NUM</span>
    <span className={`${statusBox} w-[33px]`}></span>
  </footer>
)

export default function App() {
  return (
    <div className="min-h-screen flex flex-col bg-[#f0f0f0]">
      <TitleBar />
      <MenuBar />
      <ToolBars />
      <main className="flex-1 flex flex-col">
        <div className="flex-1 flex">
          <div className="flex-1 min-w-0 flex flex-col gap-[4px] pt-[6px] pl-[2px] pr-[3px] pb-[4px] bg-[#838383]">
            <TopRow />
            <div className="flex">
              <MeasuresGrid />
              <DisplayColumn />
            </div>
            <div className="flex-1 flex gap-[2px]">
              <SelectedColor />
              <Information />
            </div>
          </div>
          <div className="w-[19px] pl-[8px] pt-[20px] pb-[42px] border-t-2 border-[#757575]"><div className="w-[2px] h-full bg-[#8a8a8a]" /></div>
        </div>
        <div className="h-[19px] pl-[19px] pr-[76px] flex items-center border-b border-white"><div className="w-full h-[2px] bg-[#8a8a8a]" /></div>
      </main>
      <TabStrip />
      <StatusBar />
    </div>
  )
}
